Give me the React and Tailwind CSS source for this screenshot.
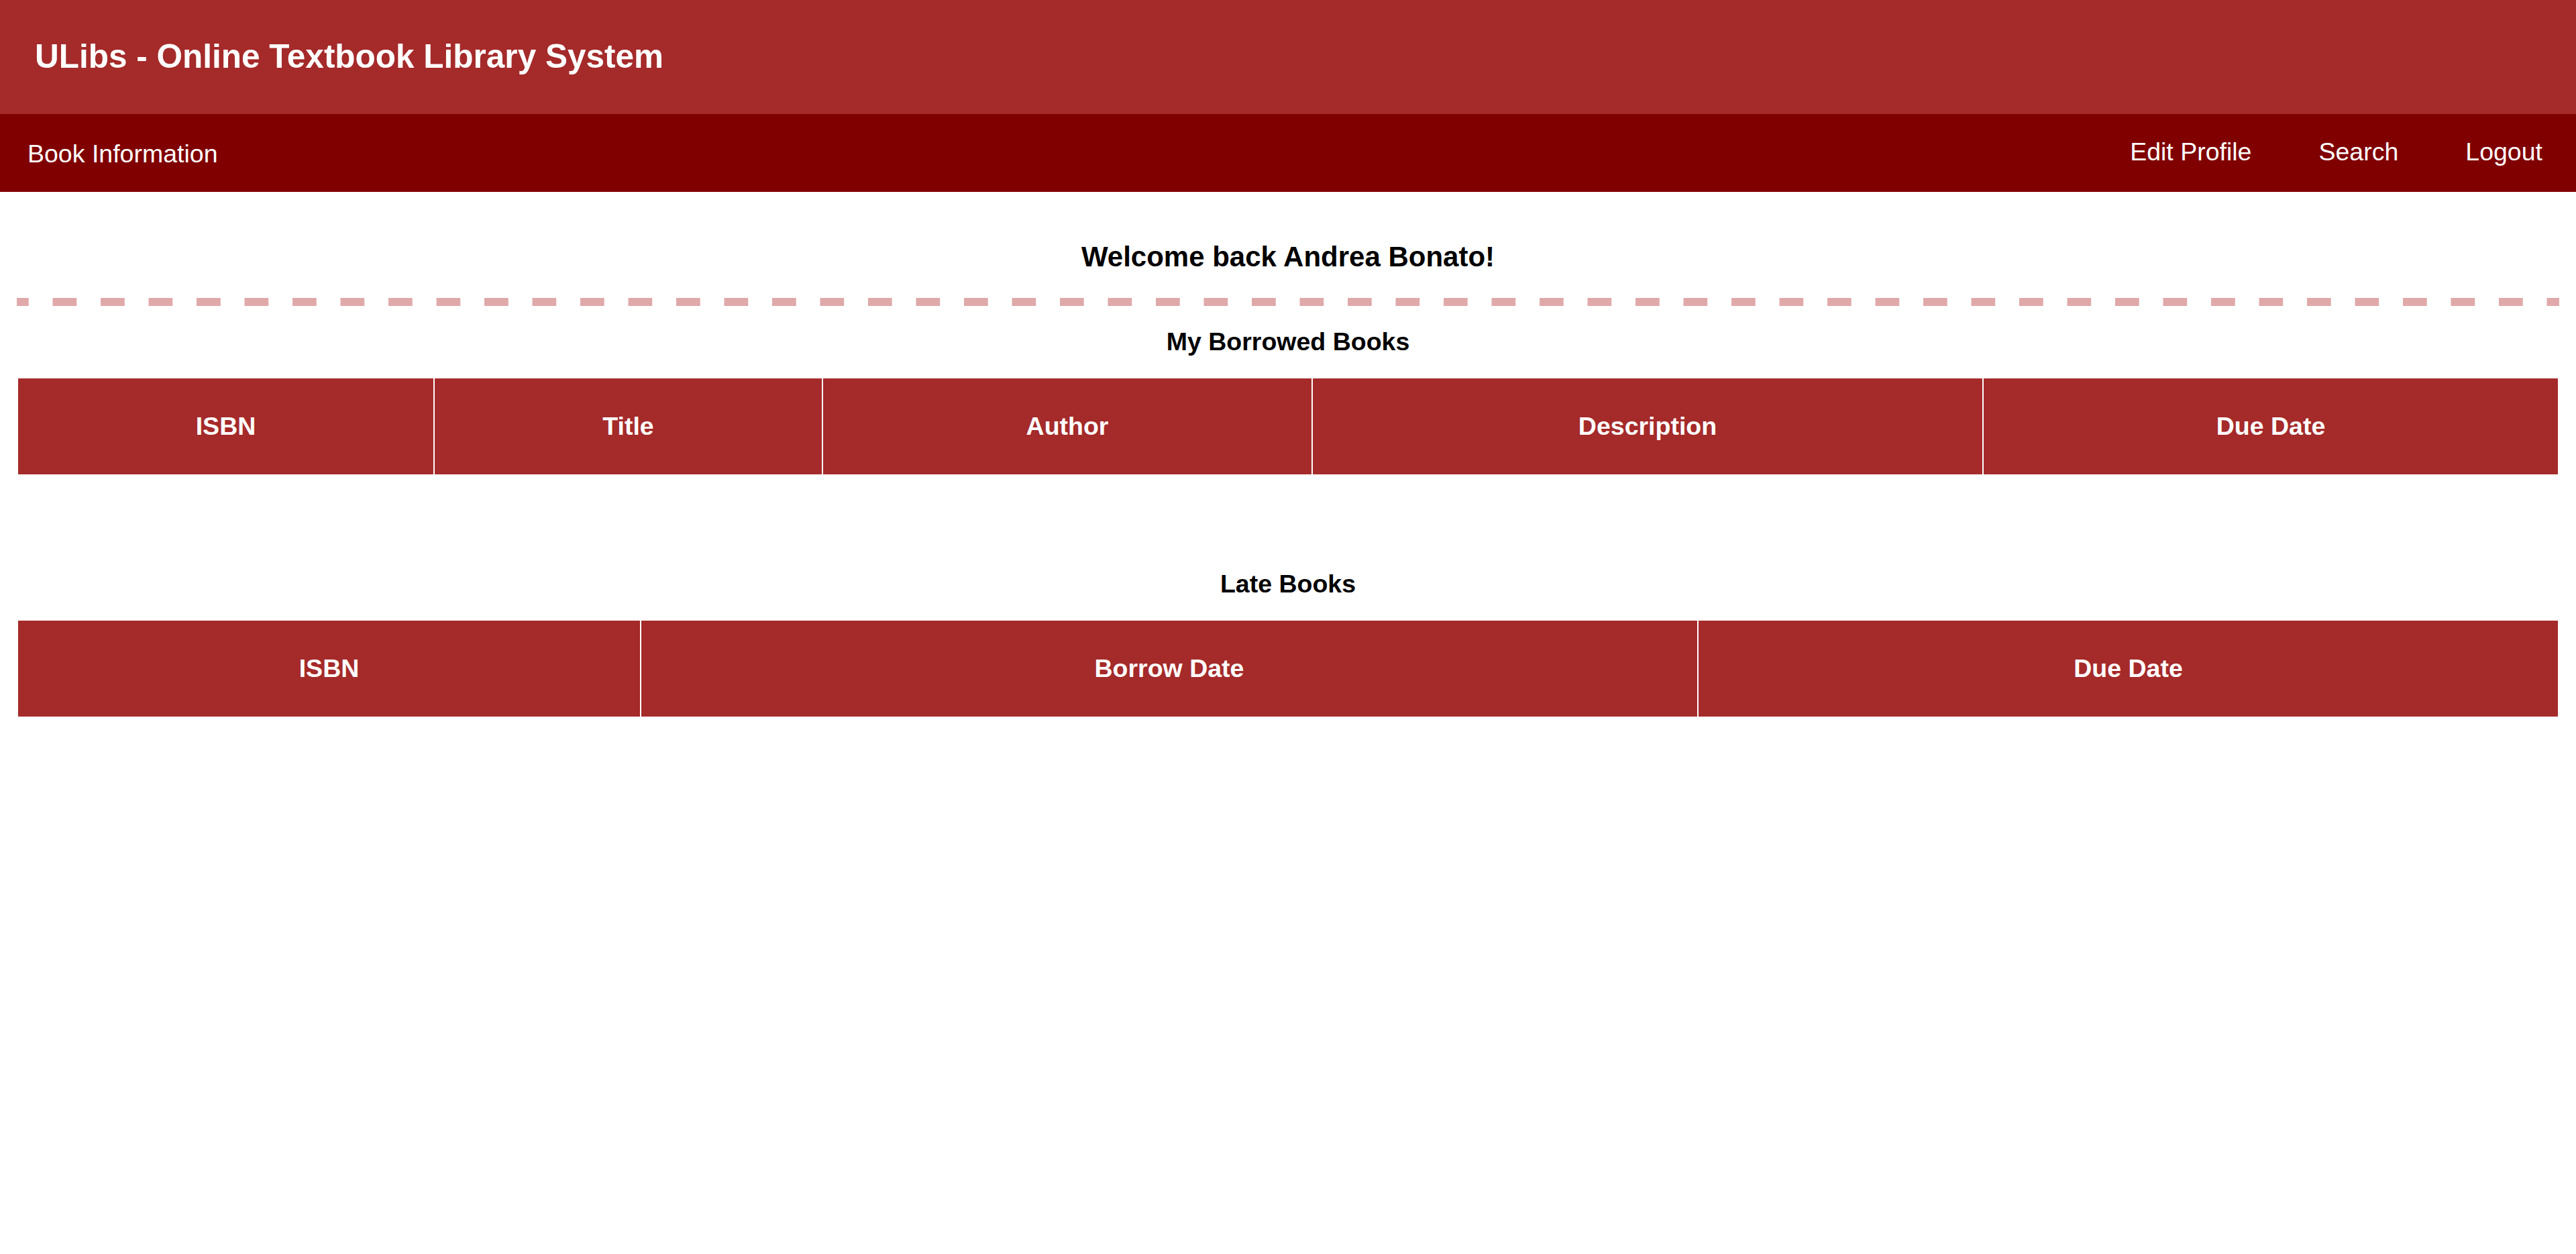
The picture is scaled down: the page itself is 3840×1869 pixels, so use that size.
const borrowedCols = [
  { label: 'ISBN', w: 'w-[619px]' },
  { label: 'Title', w: 'w-[577px]' },
  { label: 'Author', w: 'w-[728px]' },
  { label: 'Description', w: 'w-[998px]' },
  { label: 'Due Date', w: 'flex-1' },
]

const lateCols = [
  { label: 'ISBN', w: 'w-[927px]' },
  { label: 'Borrow Date', w: 'w-[1574px]' },
  { label: 'Due Date', w: 'flex-1' },
]

function HeaderRow({ cols }) {
  return (
    <div className="flex gap-[2px] bg-white">
      {cols.map((c) => (
        <div
          key={c.label}
          className={`${c.w} flex h-[143px] items-center justify-center bg-[#a52a2a] text-[37.5px] leading-[37.5px] font-bold text-white`}
        >
          {c.label}
        </div>
      ))}
    </div>
  )
}

export default function App() {
  return (
    <div className="min-h-screen bg-white font-['Liberation_Sans',Arial,sans-serif]">
      <header className="h-[170px] bg-[#a52a2a] pl-[52px] pt-[59px]">
        <h1 className="text-[49.5px] leading-[49.5px] font-bold text-white">
          ULibs - Online Textbook Library System
        </h1>
      </header>

      <nav className="flex h-[116px] justify-between bg-[#800000] text-[37.5px] leading-[37.5px] text-white">
        <a href="#" className="pl-[41px] pt-[41px]">
          Book Information
        </a>
        <div className="flex">
          <a href="#" className="px-[50px] pt-[38px]">Edit Profile</a>
          <a href="#" className="px-[50px] pt-[38px]">Search</a>
          <a href="#" className="px-[50px] pt-[38px]">Logout</a>
        </div>
      </nav>

      <main className="px-[27px]">
        <h2 className="mt-[76px] text-center text-[42px] leading-[42px] font-bold text-black">
          Welcome back Andrea Bonato!
        </h2>
        {/* dashed divider, long dashes like the original hr */}
        <div className="-mx-[2px] mt-[40px] h-[12px] bg-[linear-gradient(to_right,#e0a9a9_50%,transparent_50%)] bg-[length:71.5px_12px] bg-[position:-18px_0] bg-repeat-x" />

        <h3 className="mt-[35px] text-center text-[37.5px] leading-[37.5px] font-bold text-black">
          My Borrowed Books
        </h3>
        <div className="mt-[35.5px]">
          <HeaderRow cols={borrowedCols} />
        </div>

        <h3 className="mt-[145px] text-center text-[37.5px] leading-[37.5px] font-bold text-black">
          Late Books
        </h3>
        <div className="mt-[35.5px]">
          <HeaderRow cols={lateCols} />
        </div>
      </main>
    </div>
  )
}
